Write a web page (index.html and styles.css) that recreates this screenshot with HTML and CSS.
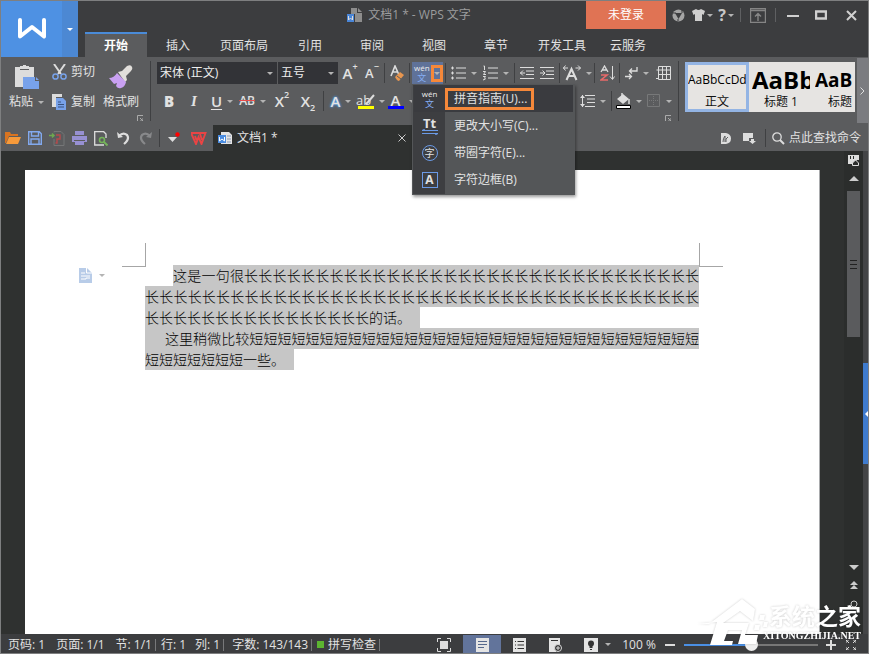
FILE: index.html
```
<!DOCTYPE html>
<html lang="zh-CN">
<head>
    <meta charset="UTF-8">
    <meta name="viewport" content="width=device-width, initial-scale=1.0">
    <title>文档1 * - WPS 文字</title>
    <link rel="stylesheet" href="styles.css">
</head>
<body>

<div class="window">
    <header class="header">
        <button class="logo" aria-label="WPS">
            <span class="logo-mark">
                <svg width="28" height="22" viewBox="0 0 28 22"><path d="M2 2v16.500L14 9l12 9.500V2" fill="none" stroke="#fff" stroke-width="4" stroke-linecap="round" stroke-linejoin="round"/></svg>
            </span>
            <span class="logo-more"><i class="arrow white"></i></span>
        </button>

        <div class="header-main">
            <div class="titlebar">
                <div class="title">
                    <svg width="15" height="15" viewBox="0 0 15 15"><path d="M4 0h6v5h5v9H8V6H4z" fill="#8d8d8d"/><path d="M11 0l4 4h-4z" fill="#8d8d8d"/><path d="M0 6h7v8H0z" fill="#4a86d8"/><path d="M1.500 8v4l2-2 2 2V8" fill="none" stroke="#ddd"/></svg>
                    <span>文档1 * - WPS 文字</span>
                </div>
                <button class="login">未登录</button>
                <button class="w24" aria-label="云"><svg width="13" height="13" viewBox="0 0 13 13"><circle cx="6.500" cy="6.500" r="6" fill="#a5a5a5"/><path d="M3 4h7L6.500 10z" fill="#3c3d3f"/><path d="M1 4l3 0M10 1v3M6 10v2" stroke="#3c3d3f"/></svg></button>
                <button class="w24" aria-label="皮肤"><svg width="13" height="12" viewBox="0 0 13 12"><path d="M0 2l4-2q2.500 2 5 0l4 2-1.500 4-1.500-1v7H3V5L1.500 6z" fill="#cfcfcf"/></svg><i class="arrow"></i></button>
                <button class="w24 help" aria-label="帮助">?<i class="arrow"></i></button>
                <i class="sep short"></i>
                <button class="w30" aria-label="功能区"><svg width="16" height="15" viewBox="0 0 16 15"><path d="M.5.5h15v14H.5zM0 2.500h16M8 13V6M5 8.500l3-3 3 3" fill="none" stroke="#858585" stroke-width="1.400"/></svg></button>
                <i class="sep short"></i>
                <button class="w30" aria-label="最小化"><svg width="12" height="12"><path d="M0 7h12" stroke="#d0d0d0" stroke-width="2"/></svg></button>
                <button class="w26" aria-label="最大化"><svg width="12" height="10"><path d="M1 1.500h10v7H1z" fill="none" stroke="#d0d0d0" stroke-width="2.500"/></svg></button>
                <button class="w34" aria-label="关闭"><svg width="11" height="11"><path d="M1 1l9 9M10 1l-9 9" stroke="#d0d0d0" stroke-width="2"/></svg></button>
            </div>
            <nav class="tabs">
                <a href="#" class="active">开始</a>
                <a href="#">插入</a>
                <a href="#">页面布局</a>
                <a href="#">引用</a>
                <a href="#">审阅</a>
                <a href="#">视图</a>
                <a href="#">章节</a>
                <a href="#">开发工具</a>
                <a href="#">云服务</a>
            </nav>
        </div>
    </header>

    <section class="ribbon">
        <div class="clipboard">
            <div class="clip-tools">
                <button class="big paste">
                    <svg width="24" height="24" viewBox="0 0 24 24"><path d="M0 2h5v3h9V2h5v10H8v10H0z" fill="#dcdcdc"/><path d="M5 1h3V0h3v1h3v3H5z" fill="#dcdcdc"/><path d="M8 12h12v4h4v8H8z" fill="#78a2ea"/><path d="M21 12l3 3h-3z" fill="#78a2ea"/></svg>
                    <span class="paste-label">粘贴<i class="arrow"></i></span>
                </button>
                <div class="clip-pair">
                    <button><svg width="15" height="16" viewBox="0 0 15 16"><path d="M2 0l7 10M13 0L6 10" stroke="#dcdcdc" stroke-width="2"/><circle cx="3.500" cy="12.500" r="2.600" fill="none" stroke="#78a2ea" stroke-width="1.500"/><circle cx="11.500" cy="12.500" r="2.600" fill="none" stroke="#78a2ea" stroke-width="1.500"/></svg>剪切</button>
                    <button><svg width="15" height="16" viewBox="0 0 15 16"><path d="M0 0h10v3H4v10H0z" fill="#dcdcdc"/><path d="M4 4h7l3 3v9H4z" fill="#78a2ea"/><path d="M6 8h3M6 10.500h6M6 13h6" stroke="#39537f"/></svg>复制</button>
                </div>
                <button class="big">
                    <svg width="24" height="24" viewBox="0 0 24 24"><path d="M9 7l4-1 5-5q4-2 5 1 1 2-1 4l-5 5 1 4-2 2z" fill="#e2dfdb"/><path d="M0 13q5 0 8-5l9 9q-1 5-5 6-3 1-5-2l1-3-3 1z" fill="#c9a0f2"/></svg>
                    <span>格式刷</span>
                </button>
            </div>
            <button class="launcher" aria-label="剪贴板选项"><svg width="6" height="6"><path d="M.5 6V.5H6M3 3l3 3M6 3v3H3" fill="none" stroke="#aaa"/></svg></button>
        </div>
        <i class="divider"></i>

        <div class="format">
            <div class="row">
                <span class="select font-name"><select aria-label="字体"><option>宋体 (正文)</option></select></span>
                <span class="select font-size"><select aria-label="字号"><option>五号</option></select></span>
                <button class="w24 letter" aria-label="增大字号">A<sup>+</sup></button>
                <button class="w20 letter small" aria-label="减小字号">A<sup>−</sup></button>
                <i class="sep"></i>
                <button class="w20" aria-label="清除格式"><svg width="15" height="16" viewBox="0 0 15 16"><path d="M1 11L5 1l4 9M3 7h5" fill="none" stroke="#ddd" stroke-width="1.600"/><path d="M5 12l5-5 4 3-5 6q-2 0-4-4z" fill="#e8964f"/><path d="M7 11l4 3" stroke="#5b5c5e"/></svg></button>
                <i class="sep"></i>
                <div class="phonetic">
                    <button class="phonetic-button" aria-label="拼音指南"><span class="wen">wén<b>文</b></span><span class="drop"><i class="arrow"></i></span></button>
                    <div class="menu" role="menu">
                        <button class="menu-item selected" role="menuitem"><span class="menu-icon"><span class="wen">wén<b>文</b></span></span><span class="menu-text">拼音指南(U)...</span></button>
                        <button class="menu-item" role="menuitem"><span class="menu-icon"><span class="tt">Tt</span><svg width="16" height="6"><path d="M0 1.500h16M0 4.500h16M0 1.500L3 0M16 4.500L13 6" fill="none" stroke="#6b9ae6"/></svg></span><span class="menu-text">更改大小写(C)...</span></button>
                        <button class="menu-item" role="menuitem"><span class="menu-icon"><span class="circle">字</span></span><span class="menu-text">带圈字符(E)...</span></button>
                        <button class="menu-item" role="menuitem"><span class="menu-icon"><span class="box">A</span></span><span class="menu-text">字符边框(B)</span></button>
                    </div>
                </div>
                <i class="sep"></i>
                <button class="w32" aria-label="项目符号"><svg width="15" height="14"><path d="M5 2h10M5 7h10M5 12h10" stroke="#ddd"/><path d="M0 2h3M1.500.5v3M0 7h3M1.500 5.500v3M0 12h3M1.500 10.500v3" stroke="#ddd"/></svg><i class="arrow"></i></button>
                <button class="w32" aria-label="编号"><svg width="15" height="16"><path d="M5 3h10M5 8h10M5 13h10" stroke="#ddd"/><path d="M.5 1h1v4M0 6.500h2.500L.5 9.500h2.500M0 11.500h2.500l-1 1.500 1 1-2.500 1" fill="none" stroke="#ddd"/></svg><i class="arrow"></i></button>
                <i class="sep"></i>
                <button class="w20" aria-label="减少缩进"><svg width="14" height="14"><path d="M0 1.500h14M6 5h8M6 8.500h8M0 12.500h14M0 7h5M3 4.500L.5 7 3 9.500" fill="none" stroke="#ddd"/></svg></button>
                <button class="w20" aria-label="增加缩进"><svg width="14" height="14"><path d="M0 1.500h14M6 5h8M6 8.500h8M0 12.500h14M0 7h5M2.500 4.500L5 7 2.500 9.500" fill="none" stroke="#ddd"/></svg></button>
                <i class="sep"></i>
                <button class="w30" aria-label="中文版式"><svg width="18" height="16"><path d="M3.500 15L8.500 4l5 11M5 11h7" fill="none" stroke="#ddd" stroke-width="2"/><path d="M0 3h5M2.500.5L.5 3l2 2.500M12.500 3h5M15 .5L17.500 3 15 5.500" fill="none" stroke="#ddd"/></svg><i class="arrow"></i></button>
                <i class="sep"></i>
                <button class="w20" aria-label="排序"><svg width="15" height="16"><path d="M1 7l3.500-6L8 7M2 5h5" fill="none" stroke="#ddd" stroke-width="1.300"/><path d="M1 10h6l-6 5h7" fill="none" stroke="#e86a6a" stroke-width="1.600"/><path d="M12.500 1v13M10 11.500l2.500 3 2-3" fill="none" stroke="#ddd"/></svg></button>
                <i class="sep"></i>
                <button class="w30" aria-label="段落标记"><svg width="13" height="14"><path d="M12 1v4H5M7 2.500L4.500 5 7 7.500M0 10.500h6M4 8l2.500 2.500L4 13" fill="none" stroke="#ddd" stroke-width="1.300"/></svg><i class="arrow"></i></button>
                <button class="w22" aria-label="表格"><svg width="15" height="14"><path d="M2.500.5h12v13h-12zM.5 4h14M2.500 8.500h12M6.500.5v13M10.500.5v13M0 12.500h3" fill="none" stroke="#ddd"/></svg></button>
            </div>
            <div class="row">
                <button class="w24 letter" aria-label="加粗"><b>B</b></button>
                <button class="w26 letter italic" aria-label="倾斜">I</button>
                <button class="w30 letter" aria-label="下划线"><u>U</u><i class="arrow"></i></button>
                <button class="w32 strike" aria-label="删除线"><s>AB</s><i class="arrow"></i></button>
                <button class="w26 letter" aria-label="上标">X<sup>2</sup></button>
                <button class="w26 letter" aria-label="下标">X<sub>2</sub></button>
                <i class="sep"></i>
                <button class="w30 letter glow" aria-label="文字效果">A<i class="arrow"></i></button>
                <button class="w30" aria-label="突出显示"><span class="mark yellow">ab<svg width="10" height="11"><path d="M9 1L3 8l-2 2" stroke="#ddd" stroke-width="2"/></svg></span><i class="arrow"></i></button>
                <button class="w30 letter" aria-label="字体颜色"><span class="mark blue">A</span><i class="arrow"></i></button>
                <div class="row-end">
                    <i class="sep"></i>
                    <button class="w32" aria-label="行距"><svg width="15" height="14"><path d="M5 1.500h10M7 5h8M7 8.500h8M5 12.500h10M2.500 1v12" stroke="#ddd"/><path d="M0 4l2.500-3L5 4M0 10l2.500 3L5 10" fill="#ddd"/></svg><i class="arrow"></i></button>
                    <i class="sep"></i>
                    <button class="w30" aria-label="底纹"><svg width="15" height="16"><path d="M1 6l6-5 6 5-6 5z" fill="#ddd"/><path d="M6 0v4M13 6v5" stroke="#ddd" stroke-width="1.500"/><path d="M.5 12.500h14v3H.5z" fill="#fff" stroke="#000"/></svg><i class="arrow"></i></button>
                    <button class="w30" aria-label="边框"><svg width="14" height="14"><path d="M.5.5h12v12H.5z" fill="none" stroke="#777879"/><path d="M6.500 2v10M2 6.500h10" stroke="#777879" stroke-dasharray="1 1"/></svg><i class="arrow"></i></button>
                </div>
            </div>
            <button class="launcher" aria-label="段落选项"><svg width="6" height="6"><path d="M.5 6V.5H6M3 3l3 3M6 3v3H3" fill="none" stroke="#aaa"/></svg></button>
        </div>
        <i class="divider"></i>

        <div class="gallery">
            <button class="style current"><span class="sample">AaBbCcDd</span><span>正文</span></button>
            <button class="style"><span class="sample h1">AaBb</span><span>标题 1</span></button>
            <button class="style partial"><span class="sample h2">AaB</span><span>标题</span></button>
        </div>
        <button class="gallery-more" aria-label="更多"><svg width="5" height="8"><path d="M.5.5L4 4 .5 7.500" fill="none" stroke="#ddd"/></svg></button>
    </section>

    <section class="quickbar">
        <button class="w22" aria-label="打开"><svg width="16" height="14"><path d="M0 1h5l1 2h7v2H4L1 12H0z" fill="#d97420"/><path d="M4 6h12l-3 7H1z" fill="#f79a3a"/></svg></button>
        <button class="w22" aria-label="保存"><svg width="14" height="14"><path d="M.7.7h10.600l2 2v10.600H.7zM3.500 1v4h7V1M3 13V8h8v5" fill="none" stroke="#82a9ee" stroke-width="1.400"/></svg></button>
        <button class="w22" aria-label="输出PDF"><svg width="16" height="15"><path d="M5 1.500V.5h7l3 3v11H5V8" fill="none" stroke="#757677"/><path d="M0 4.500h5M3 2.500l2 2-2 2" stroke="#6ea850" stroke-width="1.500" fill="none"/><path d="M7 4h4v4H8v4H6.500" fill="none" stroke="#b84a4c" stroke-width="1.400"/></svg></button>
        <button class="w22" aria-label="打印"><svg width="15" height="14"><path d="M3 0h9v4H3zM0 5h15v6H0zM3 9h9v5H3z" fill="#9790d2"/><path d="M2 9.500h11" stroke="#5b5c5e"/></svg></button>
        <button class="w22" aria-label="打印预览"><svg width="14" height="15"><path d="M10 14H.7V.7h9L12 3v4" fill="none" stroke="#ddd" stroke-width="1.300"/><circle cx="8" cy="9" r="2.500" fill="none" stroke="#74b35a" stroke-width="1.600"/><path d="M10 11l3.500 3.500" stroke="#74b35a" stroke-width="2"/></svg></button>
        <button class="w22" aria-label="撤销"><svg width="13" height="14"><path d="M0 1l1 6 5-1z" fill="#ddd"/><path d="M2 5q4-4 8-1 3 4-3 9" fill="none" stroke="#ddd" stroke-width="2.200"/></svg></button>
        <button class="w22" aria-label="恢复"><svg width="13" height="14"><path d="M13 1l-1 6-5-1z" fill="#88898b"/><path d="M11 5Q7 1 3 4q-3 4 3 9" fill="none" stroke="#88898b" stroke-width="2.200"/></svg></button>
        <i class="sep tall"></i>
        <button class="w22" aria-label="自定义"><svg width="12" height="12"><path d="M0 5h9l-4.500 5z" fill="#ddd"/><circle cx="9.500" cy="2.500" r="2.200" fill="#f00"/></svg></button>
        <button class="w28" aria-label="WPS"><svg width="16" height="13"><path d="M0 1h14.500L10.500 12 7.500 5 5 12z M4 4l1.500 4M9 2l2 6" fill="none" stroke="#ea4444" stroke-width="1.900"/></svg></button>
        <div class="doc-tab">
            <svg width="15" height="15" viewBox="0 0 15 15"><path d="M3 1h8l3 3v9H3z" fill="#e4e4e4"/><path d="M9 5h4M9 8h4M9 11h4" stroke="#8a9bb5"/><path d="M0 4h8v8H0z" fill="#4a8ce0"/><path d="M1.500 6v4l2.500-2 2.500 2V6" fill="none" stroke="#fff"/></svg>
            <span>文档1 *</span>
            <button aria-label="关闭文档"><svg width="8" height="8"><path d="M.5.5l7 7M7.500.5l-7 7" stroke="#ccc"/></svg></button>
        </div>
        <div class="search">
            <button class="w24" aria-label="在线"><svg width="10" height="11"><path d="M0 0h5q5 1 5 5.500T5 11H0z" fill="#ddd"/><path d="M2 9q0-4 2-6v6M5 9V6l2-2" fill="none" stroke="#5b5c5e"/></svg></button>
            <button class="w24" aria-label="视图选择"><svg width="13" height="11"><path d="M0 0h10v5H6v3H0z" fill="#ddd"/><path d="M8 6h3v2h2l-3.500 3L6 8h2z" fill="#ddd"/></svg></button>
            <i class="sep tall"></i>
            <button class="find"><svg width="13" height="13"><circle cx="5" cy="5" r="4.200" fill="none" stroke="#ddd" stroke-width="1.300"/><path d="M8 8l4 4" stroke="#ddd" stroke-width="2"/></svg>点此查找命令</button>
        </div>
    </section>

    <main class="workspace">
        <article class="page">
            <div class="crops"><i class="crop left"></i><i class="crop right"></i></div>
            <div class="content">
                <button class="para-tool" aria-label="段落布局"><svg width="13" height="15"><path d="M0 0h8l5 5v10H0z" fill="#b8cce8"/><path d="M7.500 0v5H13M2 5h4M2 8h9M2 11h5v-1h4" fill="none" stroke="#fff"/></svg><i class="arrow"></i></button>
                <p class="first"><span>这是一句很长长长长长长长长长长长长长长长长长长长长长长长长长长长长长长长长长长长长长长长长长长长长长长长长长长长长长长长长长长长长长长长长长长长长长长长长长长长长长长长长长长长长长长长的话。</span></p>
                <p class="second"><span>这里稍微比较短短短短短短短短短短短短短短短短短短短短短短短短短短短短短短短短短短短短短短短一些。</span></p>
            </div>
        </article>
        <aside class="scrollbar">
            <svg width="12" height="11"><path d="M0 0h11v5h-2L6 8v1H0z" fill="#ddd"/><path d="M2.500 1v3M5.500 1v3" stroke="#2b2d2c"/><path d="M4.500 8l3-3 3 3v2.500h-6z" fill="#2b2d2c" stroke="#ddd"/></svg>
            <i class="scroll-up"></i>
            <div class="thumb"><i></i><i></i><i></i></div>
            <div class="scroll-bottom">
                <i class="scroll-down"></i>
                <svg width="8" height="8"><path d="M0 4l4-4 4 4zM0 8l4-4 4 4z" fill="#ccc"/></svg>
                <svg width="8" height="8"><circle cx="4" cy="4" r="3" fill="none" stroke="#ccc"/></svg>
            </div>
        </aside>
        <div class="side"><button aria-label="任务窗格"><i></i></button></div>
    </main>

    <footer class="status">
        <span class="item">页码: 1</span>
        <span class="item">页面: 1/1</span>
        <span class="item last">节: 1/1</span>
        <span class="item narrow">行: 1</span>
        <span class="item last">列: 1</span>
        <span class="item last count">字数: 143/143</span>
        <span class="item last spell"><i></i>拼写检查</span>
        <div class="views">
            <button class="w38" aria-label="全屏显示"><svg width="14" height="14"><path d="M3 3h8v8H3z" fill="#ddd"/><path d="M.5 4V.5H4M10 .5h3.500V4M13.500 10v3.500H10M4 13.500H.5V10" fill="none" stroke="#ddd"/></svg></button>
            <button class="w38 on" aria-label="页面视图"><svg width="13" height="14"><path d="M0 0h13v14H0z" fill="#e4e4e4"/><path d="M2 3.500h9M2 6.500h9M2 9.500h6" stroke="#56688c"/></svg></button>
            <button class="w36" aria-label="大纲"><svg width="13" height="14"><path d="M0 0h13v14H0z" fill="#e4e4e4"/><path d="M2 3.500h1M2 7h1M2 10.500h1M4.500 3.500H11M4.500 7H11M4.500 10.500H11" stroke="#333"/></svg></button>
            <button class="w38" aria-label="Web 版式"><svg width="14" height="14"><path d="M0 0h11v7l-4 7H0z" fill="#e4e4e4"/><path d="M2 2.500h7" stroke="#333"/><circle cx="9" cy="10" r="3.500" fill="#333" stroke="#ddd"/><path d="M7 10h4M9 8v4" stroke="#ddd"/></svg></button>
            <button class="w44" aria-label="护眼模式"><svg width="14" height="14"><path d="M0 0h14v14H0z" fill="#e4e4e4"/><circle cx="7" cy="5.500" r="3" fill="#333"/><path d="M5.500 8h3v2h-3zM6 11h2v1H6z" fill="#333"/></svg><i class="arrow"></i></button>
            <span class="percent">100 %</span>
            <button class="w22" aria-label="缩小"><svg width="10" height="10"><path d="M0 5h10" stroke="#ddd" stroke-width="2"/></svg></button>
            <input type="range" min="0" max="100" value="50" aria-label="显示比例">
            <button class="w20" aria-label="放大"><svg width="10" height="10"><path d="M0 5h10M5 0v10" stroke="#ddd" stroke-width="2"/></svg></button>
            <button class="w20" aria-label="适应窗口"><svg width="10" height="10"><path d="M3 0H0v3M7 0h3v3M10 7v3H7M3 10H0V7M0 0l3 3M10 0L7 3M10 10L7 7M0 10l3-3" fill="none" stroke="#ddd"/></svg></button>
        </div>
    </footer>

    <div class="watermark">
        <svg width="72" height="48" viewBox="0 0 72 48"><path d="M0 25h12L45 0l13 10-2 12-13-10-17 12h26l-4 12h13l-2 9H41l4-14H31l-4 11h9l-1 4H13l7-23z" fill="#fff"/><path d="M63 16h5l-1 5h-5zM67 23h4l-1 5h-4zM58 26h5l-1 5h-5z" fill="#fff"/></svg>
        <div class="watermark-text"><strong>系统之家</strong><span>XITONGZHIJIA.NET</span></div>
    </div>
</div>

</body>
</html>
```
FILE: styles.css
```
* {
    box-sizing: border-box;
}

body {
    margin: 0;
    font-family: "Open Sans", "Noto Sans CJK SC", sans-serif;
    font-size: 12px;
    line-height: 16px;
    color: #e2e2e2;
}

button {
    display: flex;
    align-items: center;
    justify-content: center;
    padding: 0;
    border: none;
    background: none;
    color: inherit;
    font: inherit;
    white-space: nowrap;
}

a {
    color: inherit;
    text-decoration: none;
}

svg {
    display: block;
    flex: none;
}

.window {
    position: relative;
    display: flex;
    flex-direction: column;
    height: 100vh;
    border: 1px solid #7e7f80;
    background: #2f3130;
    overflow: hidden;
}

/* shared widths of the tool buttons */
.w20 { width: 20px; }
.w22 { width: 22px; }
.w24 { width: 24px; }
.w26 { width: 26px; }
.w28 { width: 28px; }
.w30 { width: 30px; }
.w32 { width: 32px; }
.w34 { width: 34px; }
.w36 { width: 36px; }
.w38 { width: 38px; }
.w44 { width: 44px; }

.arrow {
    flex: none;
    display: inline-block;
    border: 3px solid transparent;
    border-top-color: #b4b4b4;
    border-bottom: none;
    margin-left: 3px;
}

.arrow.white {
    border-top-color: #fff;
    margin: 0;
}

.sep {
    flex: none;
    width: 1px;
    height: 20px;
    margin: 0 2px;
    background: #3f4042;
}

.sep.short {
    height: 14px;
    background: #5f6062;
}

/* header */
.header {
    flex: none;
    display: flex;
    height: 56px;
    background: #3c3d3f;
}

.logo {
    width: 77px;
    align-items: stretch;
    background: #4e91e3;
}

.logo-mark {
    flex: 1;
    display: flex;
    align-items: center;
    justify-content: center;
}

.logo-more {
    width: 16px;
    display: flex;
    align-items: center;
    justify-content: center;
    background: #4c88d3;
}

.header-main {
    flex: 1;
    display: flex;
    flex-direction: column;
    justify-content: space-between;
}

.titlebar {
    display: flex;
    align-items: center;
    height: 28px;
}

.titlebar .arrow {
    margin-left: 2px;
}

.title {
    flex: 1;
    display: flex;
    align-items: center;
    justify-content: center;
    gap: 6px;
    padding-left: 154px;
    color: #9b9c9d;
}

.login {
    width: 80px;
    height: 28px;
    background: #e07354;
    color: #fff;
}

.help {
    font-size: 16px;
    font-weight: bold;
    color: #c8c8c8;
}

.tabs {
    display: flex;
    padding-left: 7px;
}

.tabs a {
    min-width: 62px;
    height: 25px;
    padding: 4px 11px 0;
    border-top: 2px solid transparent;
    text-align: center;
}

.tabs .active {
    border-top-color: #4a8bd8;
    background: #5b5c5e;
    color: #fff;
    font-weight: bold;
}

/* ribbon */
.ribbon {
    flex: none;
    display: flex;
    height: 68px;
    background: #5b5c5e;
}

.clipboard {
    width: 149px;
    padding: 5px 0 0 8px;
}

.clip-tools {
    display: flex;
    height: 50px;
    gap: 8px;
}

.big {
    flex-direction: column;
    justify-content: space-between;
    padding: 3px 0 2px;
}

.paste-label {
    display: flex;
    align-items: center;
}

.paste-label .arrow {
    margin-left: 5px;
}

.clip-pair {
    display: flex;
    flex-direction: column;
    justify-content: space-between;
    padding: 2px 0;
}

.clip-pair button {
    gap: 4px;
}

.launcher {
    margin: 3px 7px 0 auto;
}

.divider {
    width: 1px;
    height: 60px;
    margin-top: 4px;
    background: #3f4042;
}

.format {
    flex: none;
    width: 527px;
    padding: 5px 0 0 6px;
}

.row {
    display: flex;
    align-items: center;
    height: 22px;
}

.row + .row {
    margin-top: 6px;
}

.row button {
    height: 22px;
}

.row .arrow {
    margin-left: 5px;
}

.row .w32 {
    justify-content: flex-end;
    padding-right: 3px;
}

.row-end {
    display: flex;
    align-items: center;
    margin-left: auto;
    margin-right: 4px;
}

.select {
    position: relative;
    height: 22px;
}

.select::after {
    content: "";
    position: absolute;
    right: 4px;
    top: 10px;
    border: 3px solid transparent;
    border-top-color: #b4b4b4;
    border-bottom: none;
}

.select select {
    width: 100%;
    height: 22px;
    padding: 0 3px;
    border: none;
    background: #323337;
    color: #eee;
    font: inherit;
    appearance: none;
}

.font-name {
    width: 120px;
    margin-right: 1px;
}

.font-size {
    width: 60px;
}

.letter {
    font-size: 15px;
    font-weight: 600;
}

.letter sup,
.letter sub {
    font-size: 9px;
    line-height: 9px;
}

.letter sup {
    align-self: flex-start;
}

.letter sub {
    align-self: flex-end;
}

.letter.small {
    font-size: 13px;
}

.letter u {
    text-underline-offset: 2px;
}

.italic {
    font-family: "Liberation Serif", serif;
    font-style: italic;
}

.strike s {
    font-weight: 600;
    text-decoration-color: #e84c4c;
}

.glow {
    text-shadow: 0 0 3px #4a9bf0, 0 0 2px #4a9bf0;
}

.mark {
    display: flex;
    align-items: center;
    justify-content: center;
    width: 16px;
    height: 16px;
    font-size: 13px;
    border-bottom: 3px solid;
}

.mark svg {
    margin-left: -6px;
}

.yellow {
    border-color: #ff0;
}

.blue {
    border-color: #00f;
    font-size: 15px;
}

.phonetic {
    position: relative;
}

.phonetic-button {
    width: 31px;
    padding-left: 2px;
    justify-content: space-between;
    background: #5f7299;
}

.wen {
    display: flex;
    flex-direction: column;
    align-items: center;
    font-size: 8px;
    line-height: 10px;
    color: #eee;
}

.wen b {
    font-size: 9px;
    line-height: 10px;
    font-weight: normal;
    color: #85aef4;
}

.drop {
    display: flex;
    align-items: center;
    justify-content: center;
    width: 12px;
    height: 17px;
    border: 3px solid #f5883a;
}

.row .drop .arrow {
    margin: 0;
}

.menu {
    position: absolute;
    z-index: 5;
    left: 0;
    top: 22px;
    width: 163px;
    padding: 0 1px 1px;
    background: linear-gradient(to right, #3d3e41 32px, #545658 32px);
    border: 1px solid #545658;
    box-shadow: 1px 2px 3px rgba(0, 0, 0, 0.4);
}

.menu .menu-item {
    width: 100%;
    height: 27px;
    justify-content: flex-start;
}

.menu .selected {
    background: #3a3b3f;
}

.menu-icon {
    display: flex;
    flex-direction: column;
    align-items: center;
    width: 31px;
}

.menu-text {
    padding: 0 5px 0 9px;
}

.selected .menu-text {
    padding: 0 4px 0 6px;
    border: 3px solid #f5883a;
}

.tt {
    font-weight: bold;
    font-size: 13px;
    line-height: 12px;
}

.circle,
.box {
    width: 16px;
    height: 16px;
    border: 1px solid #6b9ae6;
    line-height: 14px;
    text-align: center;
}

.circle {
    border-radius: 50%;
    font-size: 10px;
}

.box {
    font-weight: bold;
}

.gallery {
    flex: 1;
    display: flex;
    height: 50px;
    margin: 5px 2px 0 6px;
    overflow: hidden;
    background: #e6e4e2;
}

.style {
    flex: none;
    flex-direction: column;
    justify-content: space-between;
    width: 64px;
    padding: 0 3px 2px;
    color: #111;
}

.current {
    padding: 0;
    border: 3px solid #93b4e4;
}

.partial {
    width: 42px;
    padding-left: 2px;
    align-items: flex-end;
}

.sample {
    width: 100%;
    height: 32px;
    line-height: 30px;
    overflow: hidden;
    text-align: left;
    color: #000;
}

.sample.h1 {
    font-size: 24px;
    font-weight: bold;
    line-height: 36px;
}

.sample.h2 {
    font-size: 19px;
    font-weight: bold;
    line-height: 36px;
}

.current .sample {
    height: 28px;
}

.current span + span {
    line-height: 14px;
}

.gallery-more {
    width: 11px;
    height: 65px;
    margin-top: 1px;
    background: #7b7c80;
}

/* quick access bar */
.quickbar {
    flex: none;
    display: flex;
    align-items: center;
    height: 26px;
    padding-left: 1px;
    background: #5b5c5e;
}

.sep.tall {
    height: 18px;
    margin: 0 3px;
}

.doc-tab {
    display: flex;
    align-items: center;
    gap: 4px;
    width: 202px;
    height: 26px;
    padding: 0 9px 0 5px;
    background: #2f3130;
}

.doc-tab button {
    margin-left: auto;
}

.search {
    display: flex;
    align-items: center;
    margin-left: auto;
    padding-right: 7px;
}

.find {
    gap: 4px;
    padding-left: 3px;
}

/* document */
.workspace {
    flex: 1;
    display: flex;
    min-height: 0;
}

.page {
    flex: 1;
    margin: 19px 24px 0;
    border-right: 1px solid #a9abad;
    background: #fff;
    color: #000;
}

.crops {
    display: flex;
    justify-content: space-between;
    padding: 73px 96px 0 97px;
}

.crop {
    width: 24px;
    height: 24px;
    border: 0 solid #a6a6a6;
    border-bottom-width: 1px;
}

.crop.left {
    border-right-width: 1px;
}

.crop.right {
    border-left-width: 1px;
}

.content {
    position: relative;
    margin: -2px 120px 0;
    font-family: "Noto Sans CJK SC", sans-serif;
    font-size: 14px;
    font-weight: 300;
    line-height: 21px;
}

.content p {
    margin: 0;
    text-align: justify;
}

.content p span {
    padding: 0 9px 1px 0;
    background: #c6c6c6;
}

.content .first {
    text-indent: 28px;
}

.content .second span {
    padding-left: 20px;
}

.para-tool {
    position: absolute;
    left: -66px;
    top: 3px;
}

.para-tool .arrow {
    margin-left: 7px;
}

.scrollbar {
    display: flex;
    flex-direction: column;
    align-items: center;
    width: 19px;
    padding-top: 4px;
    background: #2b2d2c;
}

.scroll-up,
.scroll-down {
    border: 5px solid transparent;
}

.scroll-up {
    margin: 10px 0;
    border-top: none;
    border-bottom-color: #ccc;
}

.scroll-down {
    border-bottom: none;
    border-top-color: #ccc;
}

.thumb {
    display: flex;
    flex-direction: column;
    align-items: center;
    justify-content: center;
    gap: 3px;
    width: 13px;
    height: 146px;
    background: #5a5b5d;
}

.thumb i {
    width: 7px;
    height: 1px;
    background: #222;
}

.scroll-bottom {
    display: flex;
    flex-direction: column;
    align-items: center;
    gap: 11px;
    margin-top: auto;
    padding-bottom: 26px;
}

.side {
    width: 5px;
    padding-top: 212px;
    background: #434446;
}

.side button {
    width: 5px;
    height: 101px;
    justify-content: flex-end;
    background: #3f7bce;
}

.side i {
    border: 3px solid transparent;
    border-left: none;
    border-right-color: #fff;
}

/* status bar */
.status {
    flex: none;
    display: flex;
    align-items: center;
    height: 19px;
    padding: 2px 0 0 7px;
    background: #3c3d3f;
}

.item {
    margin-right: 11px;
    line-height: 17px;
    white-space: nowrap;
}

.narrow {
    margin-right: 9px;
}

.item.last {
    height: 12px;
    margin-right: 5px;
    padding-right: 3px;
    border-right: 1px solid #77787a;
    line-height: 12px;
}

.item.count {
    margin-left: 3px;
}

.spell {
    display: flex;
    align-items: center;
    gap: 4px;
}

.spell i {
    width: 7px;
    height: 7px;
    background: #5cb531;
}

.views {
    display: flex;
    align-items: center;
    margin-left: auto;
    padding-right: 7px;
}

.views button {
    height: 19px;
}

.views .on {
    background: #62749b;
}

.views .w44 .arrow {
    margin-left: 7px;
}

.percent {
    width: 40px;
    text-align: center;
}

.views input {
    width: 134px;
    height: 14px;
    margin: 0 3px;
    appearance: none;
    background: linear-gradient(to right, #4a8fe4 50%, #777 50%) center / 100% 2px no-repeat;
}

.views input::-webkit-slider-thumb {
    appearance: none;
    width: 13px;
    height: 13px;
    border-radius: 50%;
    background: #eee;
}

/* site mark in the corner */
.watermark {
    position: absolute;
    right: 7px;
    bottom: 6px;
    display: flex;
    align-items: center;
    color: #fff;
    filter: drop-shadow(0 0 1px rgba(0, 0, 0, 0.2));
    pointer-events: none;
}

.watermark-text {
    display: flex;
    flex-direction: column;
    align-items: flex-end;
    margin-left: -6px;
}

.watermark strong {
    font-size: 23px;
    line-height: 26px;
}

.watermark-text span {
    font-family: "Liberation Serif", serif;
    font-size: 10px;
    font-weight: bold;
    line-height: 14px;
}
```
